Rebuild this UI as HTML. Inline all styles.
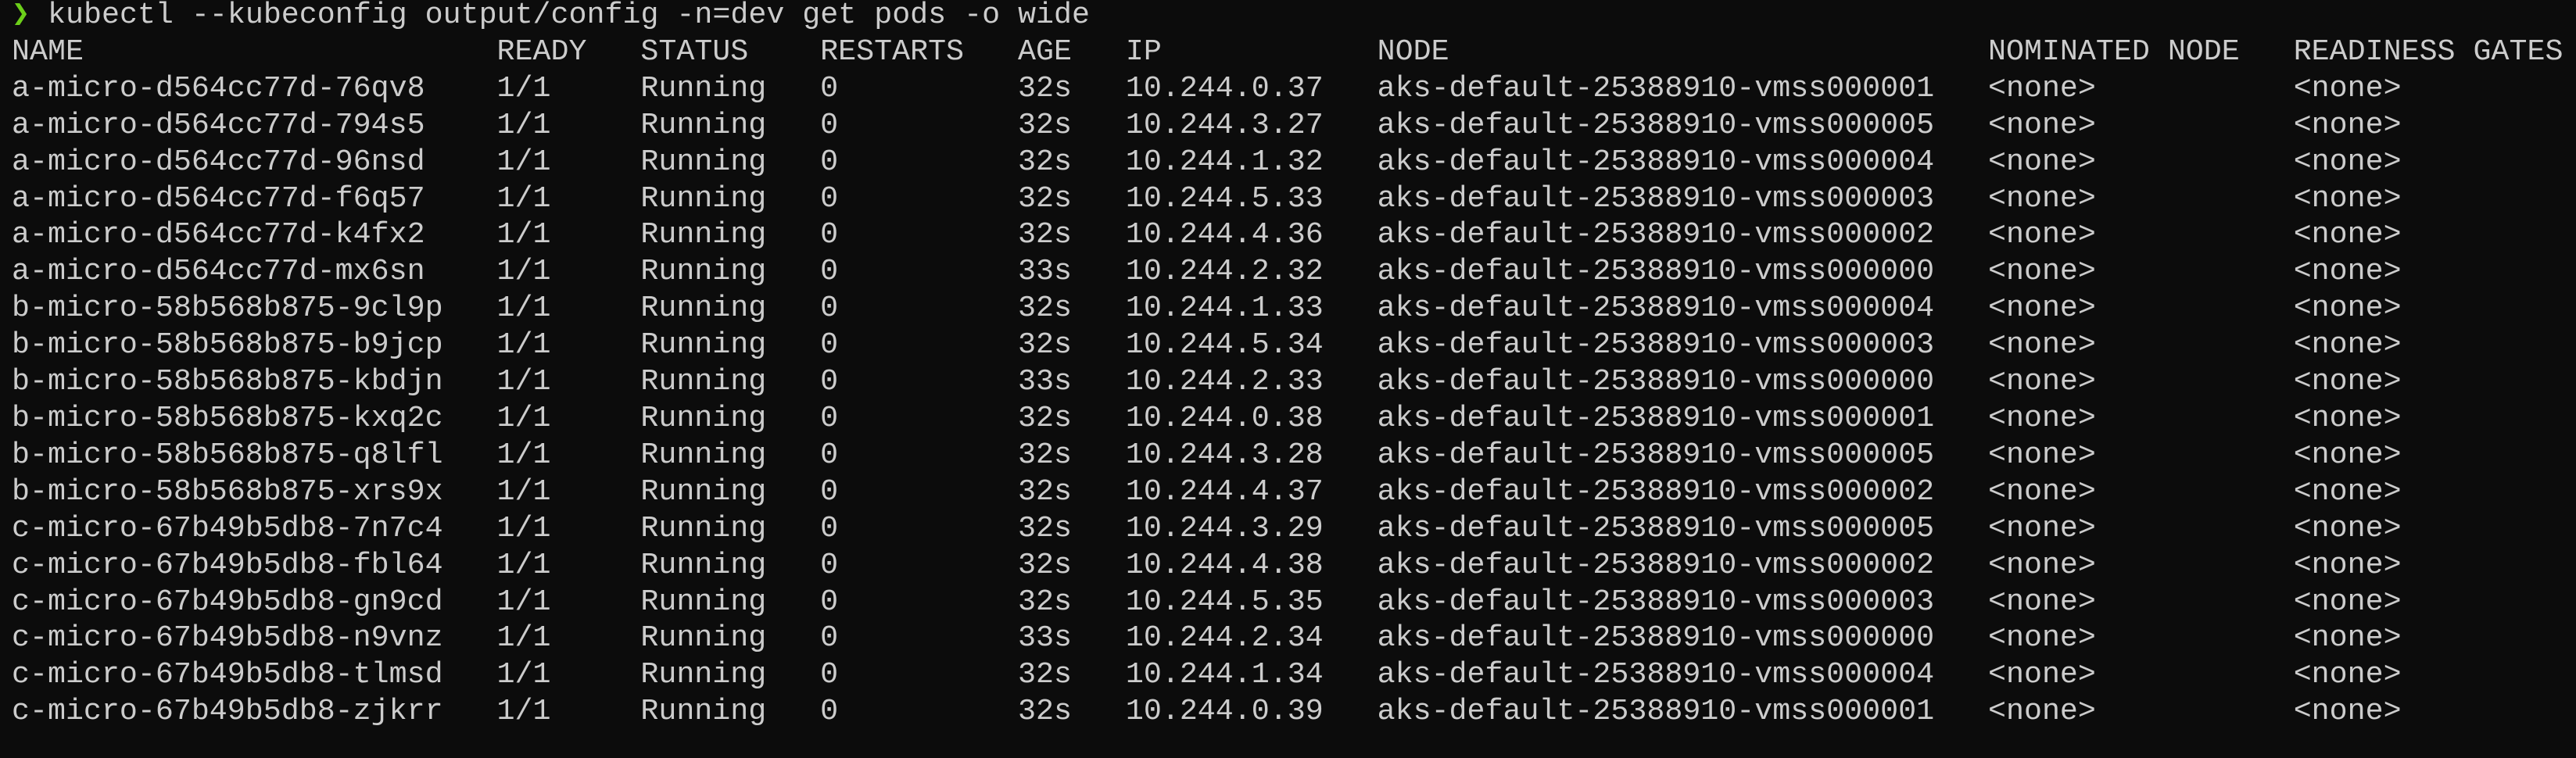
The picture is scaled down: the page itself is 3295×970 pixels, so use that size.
<!DOCTYPE html>
<html><head><meta charset="utf-8"><style>
html,body{margin:0;padding:0;background:#0c0c0c;width:3295px;height:970px;overflow:hidden}
pre{margin:0;position:absolute;left:15px;top:-4px;font-family:"Liberation Mono","DejaVu Sans Mono",monospace;font-size:38.3px;line-height:46.9px;color:#cccccc}
.g{color:#6ccf1a}
</style></head><body><pre><span class="g">❯</span> kubectl --kubeconfig output/config -n=dev get pods -o wide
NAME                       READY   STATUS    RESTARTS   AGE   IP            NODE                              NOMINATED NODE   READINESS GATES
a-micro-d564cc77d-76qv8    1/1     Running   0          32s   10.244.0.37   aks-default-25388910-vmss000001   &lt;none&gt;           &lt;none&gt;
a-micro-d564cc77d-794s5    1/1     Running   0          32s   10.244.3.27   aks-default-25388910-vmss000005   &lt;none&gt;           &lt;none&gt;
a-micro-d564cc77d-96nsd    1/1     Running   0          32s   10.244.1.32   aks-default-25388910-vmss000004   &lt;none&gt;           &lt;none&gt;
a-micro-d564cc77d-f6q57    1/1     Running   0          32s   10.244.5.33   aks-default-25388910-vmss000003   &lt;none&gt;           &lt;none&gt;
a-micro-d564cc77d-k4fx2    1/1     Running   0          32s   10.244.4.36   aks-default-25388910-vmss000002   &lt;none&gt;           &lt;none&gt;
a-micro-d564cc77d-mx6sn    1/1     Running   0          33s   10.244.2.32   aks-default-25388910-vmss000000   &lt;none&gt;           &lt;none&gt;
b-micro-58b568b875-9cl9p   1/1     Running   0          32s   10.244.1.33   aks-default-25388910-vmss000004   &lt;none&gt;           &lt;none&gt;
b-micro-58b568b875-b9jcp   1/1     Running   0          32s   10.244.5.34   aks-default-25388910-vmss000003   &lt;none&gt;           &lt;none&gt;
b-micro-58b568b875-kbdjn   1/1     Running   0          33s   10.244.2.33   aks-default-25388910-vmss000000   &lt;none&gt;           &lt;none&gt;
b-micro-58b568b875-kxq2c   1/1     Running   0          32s   10.244.0.38   aks-default-25388910-vmss000001   &lt;none&gt;           &lt;none&gt;
b-micro-58b568b875-q8lfl   1/1     Running   0          32s   10.244.3.28   aks-default-25388910-vmss000005   &lt;none&gt;           &lt;none&gt;
b-micro-58b568b875-xrs9x   1/1     Running   0          32s   10.244.4.37   aks-default-25388910-vmss000002   &lt;none&gt;           &lt;none&gt;
c-micro-67b49b5db8-7n7c4   1/1     Running   0          32s   10.244.3.29   aks-default-25388910-vmss000005   &lt;none&gt;           &lt;none&gt;
c-micro-67b49b5db8-fbl64   1/1     Running   0          32s   10.244.4.38   aks-default-25388910-vmss000002   &lt;none&gt;           &lt;none&gt;
c-micro-67b49b5db8-gn9cd   1/1     Running   0          32s   10.244.5.35   aks-default-25388910-vmss000003   &lt;none&gt;           &lt;none&gt;
c-micro-67b49b5db8-n9vnz   1/1     Running   0          33s   10.244.2.34   aks-default-25388910-vmss000000   &lt;none&gt;           &lt;none&gt;
c-micro-67b49b5db8-tlmsd   1/1     Running   0          32s   10.244.1.34   aks-default-25388910-vmss000004   &lt;none&gt;           &lt;none&gt;
c-micro-67b49b5db8-zjkrr   1/1     Running   0          32s   10.244.0.39   aks-default-25388910-vmss000001   &lt;none&gt;           &lt;none&gt;</pre></body></html>
